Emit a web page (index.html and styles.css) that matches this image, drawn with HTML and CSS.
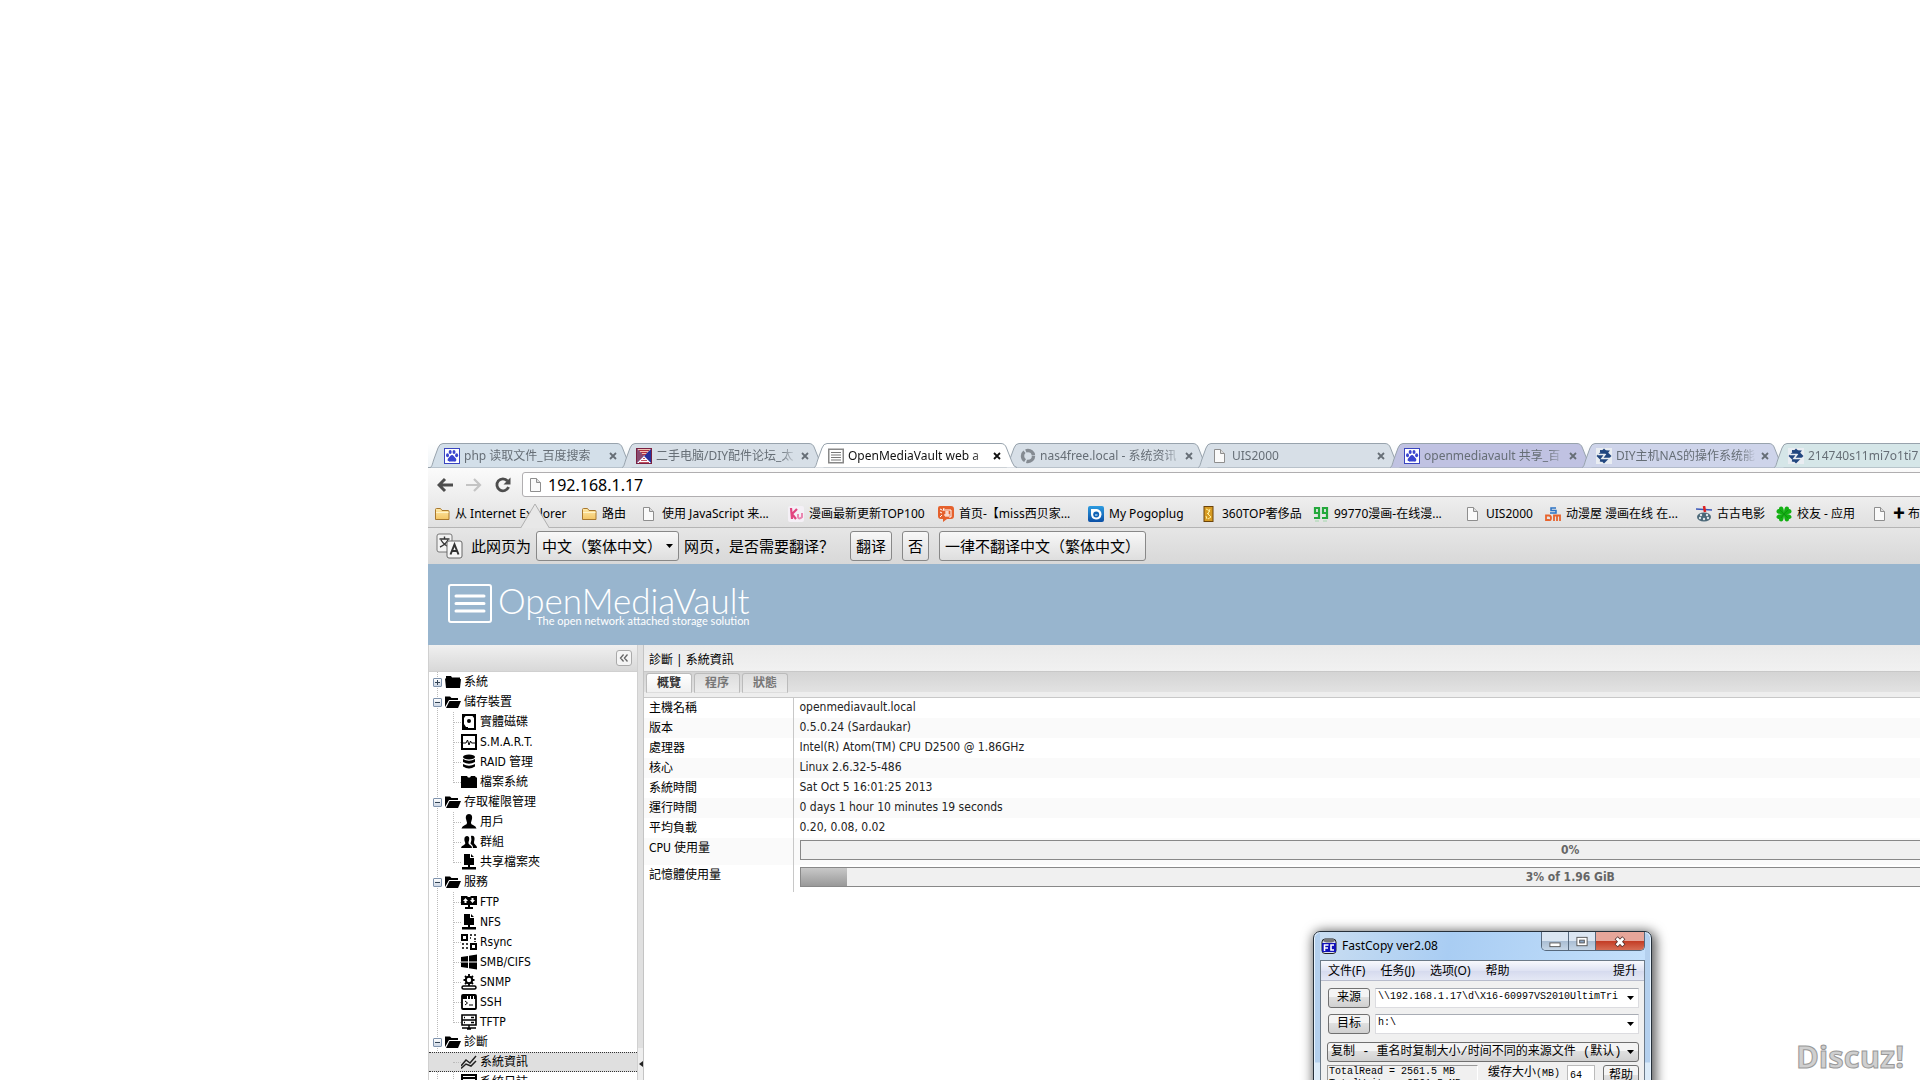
FILE: index.html
```html
<!DOCTYPE html>
<html lang="zh-Hans">
<head>
<meta charset="utf-8">
<title>OpenMediaVault web administration</title>
<link rel="stylesheet" href="styles.css">
</head>
<body>
<svg class="defs" aria-hidden="true">
  <defs>
    <linearGradient id="folderFill" x1="0" y1="0" x2="0" y2="1"><stop offset="0" stop-color="#ffe9a8"/><stop offset="1" stop-color="#f3c565"/></linearGradient>
    <linearGradient id="pogoFill" x1="0" y1="0" x2="0" y2="1"><stop offset="0" stop-color="#2c9be0"/><stop offset="1" stop-color="#0b4fa5"/></linearGradient>
  </defs>
  <symbol id="tab" viewBox="0 0 206 25"><path d="M2 24.500C4 24 4 22 6 16L10 5Q11.500 .5 15 .5H189Q193 .5 194.500 5L200 19Q202 24.500 205 24.500" stroke="#98a3ad"/></symbol>
  <symbol id="close" viewBox="0 0 8 8"><path d="M1 1L7 7M7 1L1 7" stroke="currentColor" stroke-width="1.800"/></symbol>
  <symbol id="paw" viewBox="0 0 16 16"><rect x=".5" y=".5" width="15" height="15" fill="#fff" stroke="#3a45c0"/><g fill="#3a45d0"><ellipse cx="3.500" cy="7.200" rx="1.500" ry="2"/><ellipse cx="6.200" cy="4" rx="1.500" ry="2"/><ellipse cx="10" cy="4" rx="1.500" ry="2"/><ellipse cx="12.600" cy="7.200" rx="1.500" ry="2"/><path d="M8 7C6.500 7 5.500 9 4.300 10.200C2.800 12 4 14 6 13.600C7.500 13.300 8.500 13.300 10 13.600C12 14 13.200 12 11.700 10.200C10.500 9 9.500 7 8 7"/></g></symbol>
  <symbol id="forum" viewBox="0 0 16 16"><rect x=".5" y=".5" width="15" height="15" fill="#26309c" stroke="#7a2040"/><path d="M1 1H15L8 8Z" fill="#f0c0b4"/><path d="M3 2.500H13M5 4.500H11M6 6.500H10" stroke="#b03040"/><path d="M1 1L8 8L1 15Z" fill="#8a4a70"/><path d="M1 15L8 8L15 15Z" fill="#fff"/><path d="M7 10.500H9M5 12.500H11M3 14.500H13" stroke="#c05060"/></symbol>
  <symbol id="omv" viewBox="0 0 16 16"><rect x=".75" y="1.250" width="14.500" height="13.500" fill="#fff" stroke="#888" stroke-width="1.500"/><path d="M3 4.500H13M3 7H13M3 9.500H13M3 12H13" stroke="#777" stroke-width="1.200"/></symbol>
  <symbol id="ring" viewBox="0 0 16 16"><circle cx="8" cy="8" r="5.500" fill="none" stroke="#858b92" stroke-width="3.400" stroke-dasharray="10 1.500"/></symbol>
  <symbol id="doc" viewBox="0 0 16 16"><path d="M2.500 1.500H8.500L12.500 5.500V14.500H2.500Z" fill="#fafafa" stroke="#8e8e8e"/><path d="M8.500 1.500V5.500H12.500" fill="#ddd" stroke="#8e8e8e"/></symbol>
  <symbol id="swirl" viewBox="0 0 16 16"><rect width="16" height="16" fill="#e9edf2"/><path d="M8 .5L15.500 8L8 15.500L.5 8Z" fill="#21467f"/><path d="M2 6.500H9L6 10.500H14" fill="none" stroke="#e9edf2" stroke-width="1.600"/><path d="M4 3L12 3.500L10 6M6 13L4 12.500" fill="none" stroke="#21467f" stroke-width="2"/></symbol>
  <symbol id="folder" viewBox="0 0 16 16"><path d="M1.500 13.500V3.500Q1.500 2.500 2.500 2.500H6.500L8 4.500H14Q15 4.500 15 5.500V13.500Z" fill="url(#folderFill)" stroke="#a9782e"/><path d="M2 6.500H14.500" stroke="#fff3c8"/></symbol>
  <symbol id="ku" viewBox="0 0 16 16"><rect width="16" height="16" rx="2" fill="#f4f0f6"/><path d="M3 2L4 13M9 3L4 8L8 13" stroke="#e2447f" stroke-width="2.200" fill="none"/><path d="M10 8V11Q11 14 14 11V7" stroke="#ea86b0" stroke-width="2" fill="none"/></symbol>
  <symbol id="tao" viewBox="0 0 16 16"><path d="M2 0H13Q16 0 16 3V10Q16 13 13 13H9L5 16V13H3Q0 13 0 10V2Q0 0 2 0" fill="#e5612d"/><path d="M2 3L4 4M2 6L4 7M2 11L4 9M6 2L5 5M6 4H13V11H11M7 6H11M9 5V10M7 8H11M7 8V10H11V8" stroke="#fff" fill="none"/></symbol>
  <symbol id="pogo" viewBox="0 0 16 16"><rect width="16" height="16" rx="2" fill="url(#pogoFill)"/><path d="M3 3H9Q13.500 4 13.500 8.500Q13 13.500 8 13.500Q3 13 3 8Z" fill="#fff"/><circle cx="8.200" cy="8.500" r="3" fill="#0e63b6"/><path d="M7 9H9.500" stroke="#fff"/></symbol>
  <symbol id="gold" viewBox="0 0 16 16"><rect x="3" y=".5" width="9" height="15" fill="#d69b22" stroke="#6b430a"/><path d="M5 3L9 5L6 8M9 3L7 8L10 11L7 13M5 10L6 13" stroke="#fff0a0" fill="none"/></symbol>
  <symbol id="nine" viewBox="0 0 16 16"><path d="M6 7H2V2H6V12H1M14 7H10V2H14V12H9" stroke="#24a83c" stroke-width="2.200" fill="none"/><path d="M2 15H6M10 15H14" stroke="#a3d8ac"/></symbol>
  <symbol id="sdm" viewBox="0 0 16 16"><path d="M11 2H6V4.500H11V7H5" stroke="#2d73c4" stroke-width="1.500" fill="none"/><path d="M1 9.500H4Q6 9.500 6 12T4 14H1ZM9 15V9.500H15V15M12 9.500V15" stroke="#e8632c" stroke-width="1.800" fill="none"/></symbol>
  <symbol id="film" viewBox="0 0 16 16"><path d="M0 3L16 4" stroke="#3956b8" stroke-width="1.500"/><path d="M8 0L9 6" stroke="#d22" stroke-width="2.500"/><ellipse cx="8" cy="11" rx="7" ry="4.500" fill="#4b6878"/><g fill="#dce6ea"><circle cx="5" cy="9" r="1.200"/><circle cx="11" cy="9" r="1.200"/><circle cx="4" cy="12" r="1.200"/><circle cx="12" cy="12" r="1.200"/><circle cx="8" cy="13" r="1.200"/></g></symbol>
  <symbol id="clover" viewBox="0 0 16 16"><g fill="#12b012"><path d="M8 8C4 8 0 8 .5 5C1 3 3 3 3 3C3 0 6 0 7 1.500C8 3.500 8 6 8 8M8 8C12 8 16 8 15.500 5C15 3 13 3 13 3C13 0 10 0 9 1.500C8 3.500 8 6 8 8M8 8C4 8 0 8.500 .5 11.500C1 13 3 13 3 13C3 16 6 16 7 14.500C8 12 8 10 8 8M8 8C12 8 16 8.500 15.500 11.500C15 13 13 13 13 13C13 16 10 16 9 14.500C8 12 8 10 8 8"/></g><path d="M8 8L4 4M8 8L12 4M8 8L5 12M8 8L12 12" stroke="#0c8a10" stroke-width=".7"/></symbol>
  <symbol id="t-folder" viewBox="0 0 16 16"><path d="M0 4.500H1V2H6L7 3.500H15V5H16L15 14H1Z"/></symbol>
  <symbol id="t-open" viewBox="0 0 16 16"><path d="M0 13V2.500H5L6.500 4H13V6H4Z"/><path d="M1 14L4.500 7H16L13 14Z"/></symbol>
  <symbol id="t-files" viewBox="0 0 16 16"><path d="M0 2H6L7 3.500H9L10 2H14L15 3.500H16V14H0Z"/></symbol>
  <symbol id="t-disk" viewBox="0 0 16 16"><path fill-rule="evenodd" d="M1 0H15V16H1ZM4.500 2L3 4V10L5 13H7V14H13V4L11.500 2Z"/><circle cx="8" cy="7" r="2"/></symbol>
  <symbol id="t-smart" viewBox="0 0 16 16"><rect x="1" y="1" width="14" height="14" fill="none" stroke="#000" stroke-width="2"/><path d="M2 9H5L6.500 6L8 11L9.500 7L10.500 9H14" fill="none" stroke="#000"/></symbol>
  <symbol id="t-raid" viewBox="0 0 16 16"><ellipse cx="8" cy="3" rx="6" ry="2.500"/><path d="M2 5Q8 8.500 14 5V8Q8 11.500 2 8ZM2 10Q8 13.500 14 10V12.500Q8 16.500 2 12.500Z"/></symbol>
  <symbol id="t-user" viewBox="0 0 16 16"><path d="M8 0C11 0 11.500 3 11 5C10.500 7 10 8 10 9Q10 10.500 12 11Q15 12 15.500 14.500H.5Q1 12 4 11Q6 10.500 6 9C6 8 5.500 7 5 5C4.500 3 5 0 8 0"/></symbol>
  <symbol id="t-group" viewBox="0 0 16 16"><path d="M6 2C9 2 8.500 6 7.500 8Q7 10 9 11Q11 12 11 14H0Q0 12 3 11Q5 10 4 8C3 6 3 2 6 2M10 2C14 1 14 5 13 8Q12.500 9.500 14.500 11Q16 12 16 14H12Q12 11.500 9.500 9.500Q11 6 10 2"/></symbol>
  <symbol id="t-share" viewBox="0 0 16 16"><path d="M3 0H9V4H13V11H3Z"/><path d="M10 0L13 3H10ZM7 11H9V13H15V15.500H1V13H7Z"/></symbol>
  <symbol id="t-ftp" viewBox="0 0 16 16"><path fill-rule="evenodd" d="M0 2H6L7 3H9L10 2H16V11H0ZM4.500 4L2 7H3.500V9H5.500V7H7ZM11.500 9L14 6H12.500V4H10.500V6H9Z"/><path d="M7 11H9V13H12V15H4V13H7Z"/></symbol>
  <symbol id="t-rsync" viewBox="0 0 16 16"><path d="M1 1H6V6H1ZM10 10H15V15H10Z" fill="none" stroke="#000" stroke-width="2"/><path d="M9 1H11M13 1H15M14 4V6M14 7V8M2 9V11M2 13V15M5 14H7M9 4H10M5 10H7" stroke="#000" stroke-width="1.500"/></symbol>
  <symbol id="t-win" viewBox="0 0 16 16"><path d="M0 3L7 2V7.500H0ZM8 1.800L16 .5V7.500H8ZM0 8.500H7V14L0 13ZM8 8.500H16V15.500L8 14.200Z"/></symbol>
  <symbol id="t-snmp" viewBox="0 0 16 16"><circle cx="8" cy="6" r="3.200" fill="none" stroke="#000" stroke-width="2"/><path d="M8 0V2M8 9V12M2.500 6H4M12 6H13.500M4 2L5.500 3.500M12 2L10.500 3.500M4 10L5.500 8.500M12 10L10.500 8.500" stroke="#000" stroke-width="1.800"/><rect x="1" y="12" width="14" height="3" rx="1.500" fill="#fff" stroke="#000" stroke-width="1.500"/></symbol>
  <symbol id="t-ssh" viewBox="0 0 16 16"><rect x="1" y="1" width="14" height="14" rx="1" fill="none" stroke="#000" stroke-width="1.800"/><path d="M1 3.500H15" stroke="#000" stroke-width="3" stroke-dasharray="5 1 2 1 2 1 4"/><path d="M4 7L6.500 9L4 11M8 11H12" stroke="#000" fill="none"/></symbol>
  <symbol id="t-tftp" viewBox="0 0 16 16"><path d="M1 1H15V6H1ZM1 6H15V11H1Z" fill="none" stroke="#000" stroke-width="1.600"/><path d="M10 3.500H13M10 8.500H13M3 3.500H4M3 8.500H4M8 11V14M1 14H15M6 15H10" stroke="#000" stroke-width="1.400"/></symbol>
  <symbol id="t-chart" viewBox="0 0 16 16"><path d="M0 12L5 6L9 9L15 2M0 14.500L5 10L10 12L15 7" fill="none" stroke="#222" stroke-width="1.500"/></symbol>
  <symbol id="t-log" viewBox="0 0 16 16"><path d="M1 1H15V15H1ZM1 4H15M4 7H12M4 10H12" fill="none" stroke="#000" stroke-width="2"/></symbol>
</svg>

<div class="desktop">
  <div class="browser">
    <nav class="tabs" aria-label="标签页">
      <div class="tab glow"><svg class="shape"><use href="#tab"/></svg><svg class="ic"><use href="#paw"/></svg><span class="name">php 读取文件_百度搜索</span><button class="x" aria-label="关闭"><svg><use href="#close"/></svg></button></div>
      <div class="tab"><svg class="shape"><use href="#tab"/></svg><svg class="ic"><use href="#forum"/></svg><span class="name">二手电脑/DIY配件论坛_太</span><button class="x" aria-label="关闭"><svg><use href="#close"/></svg></button></div>
      <div class="tab active"><svg class="shape"><use href="#tab"/></svg><svg class="ic"><use href="#omv"/></svg><span class="name">OpenMediaVault web a</span><button class="x" aria-label="关闭"><svg><use href="#close"/></svg></button></div>
      <div class="tab"><svg class="shape"><use href="#tab"/></svg><svg class="ic"><use href="#ring"/></svg><span class="name">nas4free.local - 系统资讯</span><button class="x" aria-label="关闭"><svg><use href="#close"/></svg></button></div>
      <div class="tab"><svg class="shape"><use href="#tab"/></svg><svg class="ic"><use href="#doc"/></svg><span class="name">UIS2000</span><button class="x" aria-label="关闭"><svg><use href="#close"/></svg></button></div>
      <div class="tab violet"><svg class="shape"><use href="#tab"/></svg><svg class="ic"><use href="#paw"/></svg><span class="name">openmediavault 共享_百</span><button class="x" aria-label="关闭"><svg><use href="#close"/></svg></button></div>
      <div class="tab lilac"><svg class="shape"><use href="#tab"/></svg><svg class="ic"><use href="#swirl"/></svg><span class="name">DIY主机NAS的操作系统能</span><button class="x" aria-label="关闭"><svg><use href="#close"/></svg></button></div>
      <div class="tab mint"><svg class="shape"><use href="#tab"/></svg><svg class="ic"><use href="#swirl"/></svg><span class="name">214740s11mi7o1ti7</span></div>
    </nav>
    <div class="toolbar">
      <button class="nav" aria-label="后退"><svg viewBox="0 0 16 16"><path d="M16 8H2M8 2L2 8L8 14" fill="none" stroke="#4d4d4d" stroke-width="3"/></svg></button>
      <button class="nav" aria-label="前进"><svg viewBox="0 0 16 16"><path d="M0 8H14M8 2L14 8L8 14" fill="none" stroke="#c4c4c4" stroke-width="2.200"/></svg></button>
      <button class="nav" aria-label="刷新"><svg viewBox="0 0 16 16"><path d="M12.500 4A6 6 0 1 0 13.500 10" fill="none" stroke="#4d4d4d" stroke-width="2.800"/><path d="M15.500 .5V7.500H8.500Z" fill="#4d4d4d"/></svg></button>
      <label class="omnibox"><svg class="ic"><use href="#doc"/></svg><input type="text" value="192.168.1.17" aria-label="网址"></label>
    </div>
    <nav class="bookmarks" aria-label="书签">
      <a href="#"><svg class="ic"><use href="#folder"/></svg>从 Internet Explorer</a>
      <a href="#"><svg class="ic"><use href="#folder"/></svg>路由</a>
      <a href="#"><svg class="ic"><use href="#doc"/></svg>使用 JavaScript 来...</a>
      <a href="#"><svg class="ic"><use href="#ku"/></svg>漫画最新更新TOP100</a>
      <a href="#"><svg class="ic"><use href="#tao"/></svg>首页-【miss西贝家...</a>
      <a href="#"><svg class="ic"><use href="#pogo"/></svg>My Pogoplug</a>
      <a href="#"><svg class="ic"><use href="#gold"/></svg>360TOP奢侈品</a>
      <a href="#"><svg class="ic"><use href="#nine"/></svg>99770漫画-在线漫...</a>
      <a href="#"><svg class="ic"><use href="#doc"/></svg>UIS2000</a>
      <a href="#"><svg class="ic"><use href="#sdm"/></svg>动漫屋 漫画在线 在...</a>
      <a href="#"><svg class="ic"><use href="#film"/></svg>古古电影</a>
      <a href="#"><svg class="ic"><use href="#clover"/></svg>校友 - 应用</a>
      <a href="#"><svg class="ic"><use href="#doc"/></svg>✚ 布</a>
      <svg class="notch" viewBox="0 0 28 25"><path d="M0 25L14 1L28 25Z" fill="#e8e8e8"/><path d="M0 24.500L14 1L28 24.500" fill="none" stroke="#b0b0b0"/></svg>
    </nav>
    <div class="translate">
      <svg class="lang" viewBox="0 0 27 27"><rect x="1" y="1" width="15" height="18" rx="2" fill="#f2f2f2" stroke="#777"/><path d="M3.500 6H13.500M8.500 3.500V6M5 7Q8 12 13 14M12 7Q9 12 4 14" stroke="#333" stroke-width="1.400" fill="none"/><rect x="11" y="8" width="15" height="17" rx="2" fill="#f6f6f6" stroke="#666"/><path d="M14.500 21.500L18.500 11.500L22.500 21.500M16 18H21" stroke="#333" stroke-width="2" fill="none"/></svg>
      <label for="lang">此网页为</label>
      <select id="lang"><option>中文（繁体中文）</option></select>
      <span class="ask">网页，是否需要翻译？</span>
      <button>翻译</button><button>否</button><button>一律不翻译中文（繁体中文）</button>
    </div>

    <header class="banner">
      <svg class="mark" viewBox="0 0 44 40"><rect x="1" y="1" width="42" height="37" rx="2" fill="none" stroke="#fff" stroke-width="2"/><path d="M8 12H36M8 19.500H36M8 27H36" stroke="#fff" stroke-width="3" stroke-linecap="round"/></svg>
      <div class="brand"><span class="word">OpenMediaVault</span><span class="motto">The open network attached storage solution</span></div>
    </header>

    <div class="work" lang="zh-Hant">
      <aside class="side">
        <div class="side-head"><button aria-label="收合"><svg viewBox="0 0 16 16"><path d="M7.500 4L4 8L7.500 12M12 4L8.500 8L12 12" fill="none" stroke="#666" stroke-width="1.500"/></svg></button></div>
        <ul class="tree">
          <li><a href="#"><i class="exp plus"></i><svg class="ic"><use href="#t-folder"/></svg>系統</a></li>
          <li><a href="#"><i class="exp"></i><svg class="ic"><use href="#t-open"/></svg>儲存裝置</a>
            <ul>
              <li><a href="#"><svg class="ic"><use href="#t-disk"/></svg>實體磁碟</a></li>
              <li><a href="#" class="latin"><svg class="ic"><use href="#t-smart"/></svg>S.M.A.R.T.</a></li>
              <li><a href="#"><svg class="ic"><use href="#t-raid"/></svg><span><span class="latin">RAID</span> 管理</span></a></li>
              <li><a href="#"><svg class="ic"><use href="#t-files"/></svg>檔案系統</a></li>
            </ul></li>
          <li><a href="#"><i class="exp"></i><svg class="ic"><use href="#t-open"/></svg>存取權限管理</a>
            <ul>
              <li><a href="#"><svg class="ic"><use href="#t-user"/></svg>用戶</a></li>
              <li><a href="#"><svg class="ic"><use href="#t-group"/></svg>群組</a></li>
              <li><a href="#"><svg class="ic"><use href="#t-share"/></svg>共享檔案夾</a></li>
            </ul></li>
          <li><a href="#"><i class="exp"></i><svg class="ic"><use href="#t-open"/></svg>服務</a>
            <ul>
              <li><a href="#" class="latin"><svg class="ic"><use href="#t-ftp"/></svg>FTP</a></li>
              <li><a href="#" class="latin"><svg class="ic"><use href="#t-share"/></svg>NFS</a></li>
              <li><a href="#" class="latin"><svg class="ic"><use href="#t-rsync"/></svg>Rsync</a></li>
              <li><a href="#" class="latin"><svg class="ic"><use href="#t-win"/></svg>SMB/CIFS</a></li>
              <li><a href="#" class="latin"><svg class="ic"><use href="#t-snmp"/></svg>SNMP</a></li>
              <li><a href="#" class="latin"><svg class="ic"><use href="#t-ssh"/></svg>SSH</a></li>
              <li><a href="#" class="latin"><svg class="ic"><use href="#t-tftp"/></svg>TFTP</a></li>
            </ul></li>
          <li><a href="#"><i class="exp"></i><svg class="ic"><use href="#t-open"/></svg>診斷</a>
            <ul>
              <li class="on"><a href="#"><svg class="ic"><use href="#t-chart"/></svg>系統資訊</a></li>
              <li><a href="#"><svg class="ic"><use href="#t-log"/></svg>系統日誌</a></li>
            </ul></li>
        </ul>
      </aside>
      <div class="split"><button aria-label="收合側欄"></button></div>
      <main class="panel">
        <h1>診斷 | 系統資訊</h1>
        <div class="ptabs"><button class="cur">概覽</button><button>程序</button><button>狀態</button></div>
        <table class="info">
          <tr><th>主機名稱</th><td>openmediavault.local</td></tr>
          <tr><th>版本</th><td>0.5.0.24 (Sardaukar)</td></tr>
          <tr><th>處理器</th><td>Intel(R) Atom(TM) CPU D2500 @ 1.86GHz</td></tr>
          <tr><th>核心</th><td>Linux 2.6.32-5-486</td></tr>
          <tr><th>系統時間</th><td>Sat Oct 5 16:01:25 2013</td></tr>
          <tr><th>運行時間</th><td>0 days 1 hour 10 minutes 19 seconds</td></tr>
          <tr><th>平均負載</th><td>0.20, 0.08, 0.02</td></tr>
          <tr class="meter"><th><span class="latin">CPU</span> 使用量</th><td><div class="bar"><i style="width:0%"></i><b>0%</b></div></td></tr>
          <tr class="meter"><th>記憶體使用量</th><td><div class="bar"><i style="width:3%"></i><b>3% of 1.96 GiB</b></div></td></tr>
        </table>
      </main>
    </div>
  </div>

  <section class="win">
    <div class="caption">
      <svg class="fc" viewBox="0 0 16 16"><rect x="1" y="1" width="14" height="14.500" rx="3" fill="#dfe3f5" stroke="#222"/><ellipse cx="8" cy="2.500" rx="6" ry="2" fill="#777"/><rect x="1" y="5" width="14" height="9" fill="#1212b8"/><path d="M3.500 13V7H7.500M4 10H7M13 7H10V12H13" stroke="#fff" stroke-width="1.600" fill="none"/></svg>
      <span>FastCopy ver2.08</span>
      <div class="ctl"><button aria-label="最小化"><svg viewBox="0 0 28 19"><rect x="8.500" y="10.500" width="11" height="4" fill="#fff" stroke="#555"/></svg></button><button aria-label="最大化"><svg viewBox="0 0 28 19"><rect x="8.500" y="4.500" width="11" height="9" fill="#fff" stroke="#555"/><rect x="11.500" y="7.500" width="5" height="3" fill="#8aa4c4" stroke="#555"/></svg></button><button class="kill" aria-label="关闭"><svg viewBox="0 0 28 19"><path d="M10 5L18 13.500M18 5L10 13.500" stroke="#54302c" stroke-width="4.600"/><path d="M10.500 5.500L17.500 13M17.500 5.500L10.500 13" stroke="#fff" stroke-width="3"/></svg></button></div>
    </div>
    <div class="client">
      <div class="menu"><a href="#">文件(F)</a><a href="#">任务(J)</a><a href="#">选项(O)</a><a href="#">帮助</a><a href="#" class="up">提升</a></div>
      <div class="form">
        <div class="row"><button>来源</button><select aria-label="来源"><option>\\192.168.1.17\d\X16-60997VS2010UltimTri</option></select></div>
        <div class="row"><button>目标</button><select aria-label="目标"><option>h:\</option></select></div>
        <select class="mode" aria-label="模式"><option>复制 - 重名时复制大小/时间不同的来源文件 (默认)</option></select>
        <div class="foot"><div class="stat">TotalRead = 2561.5 MB<br>TotalWrite = 2561.5 MB</div><label for="buf">缓存大小<span>(MB)</span></label><input id="buf" type="text" value="64"><button>帮助</button></div>
      </div>
    </div>
  </section>
  <div class="stamp">Discuz!</div>
</div>
</body>
</html>
```
FILE: styles.css
```css
* { box-sizing: border-box; }
body { margin: 0; background: #fff; color: #000; font: 12px/16px "Noto Sans", "Noto Sans CJK SC", sans-serif; }
button, input, select { font: inherit; color: inherit; margin: 0; padding: 0; border: 0; background: none; appearance: none; border-radius: 0; }
a { color: inherit; text-decoration: none; }
.defs { position: absolute; width: 0; height: 0; }
svg { display: block; flex: none; }
.ic { width: 16px; height: 16px; }
.desktop { position: relative; height: 100vh; overflow: hidden; padding: 443px 0 0 428px; }
.browser { width: 100vw; }

/* browser chrome */
.tabs { display: flex; height: 25px; background: linear-gradient(#fff, #eef3f6); box-shadow: inset 0 -1px #98a3ad; }
.tab { position: relative; display: flex; align-items: center; width: 192px; height: 25px; padding: 0 3px 0 16px; color: #666e76; --fill: #d7dfe7; }
.tab > * { position: relative; }
.tab .shape { position: absolute; left: 0; top: 0; width: 206px; height: 25px; fill: var(--fill); }
.tab .name { flex: 1; width: 0; margin: 0 4px 0 4px; overflow: hidden; white-space: nowrap; mask-image: linear-gradient(90deg, #000 88%, transparent); }
.tab .x { width: 8px; height: 8px; }
.tab .x svg { width: 8px; height: 8px; }
.tab.active { z-index: 1; color: #111; --fill: #fff; }
.tab.glow { --fill: #d3dfe9; }
.tab.violet { --fill: #c0c2e2; }
.tab.lilac { --fill: #ced4ea; }
.tab.mint { --fill: #d5e6e8; }
.toolbar { display: flex; align-items: center; height: 33px; padding: 0 0 0 9px; background: linear-gradient(#fbfbfb, #ececec); }
.nav { width: 16px; height: 16px; margin-right: 13px; }
.nav svg { width: 16px; height: 16px; }
.omnibox { display: flex; align-items: center; flex: 1; height: 25px; margin: 0 90px 0 -2px; padding-left: 5px; background: #fff; border: 1px solid #b0aeb0; border-radius: 3px; }
.omnibox input { flex: 1; margin-left: 4px; font-size: 16px; line-height: 22px; }
.bookmarks { position: relative; display: grid; grid-template-columns: 147px 60px 147px 150px 150px 113px 112px 152px 80px 151px 80px 96px 96px; height: 27px; padding-left: 6px; background: linear-gradient(#ececec, #e0e0e0); border-bottom: 1px solid #b4b4b4; }
.bookmarks a { display: flex; align-items: center; gap: 5px; white-space: pre; }
.notch { position: absolute; left: 93px; top: 2px; width: 28px; height: 25px; }
.translate { display: flex; align-items: center; height: 36px; padding-left: 8px; font-size: 15px; line-height: 20px; background: linear-gradient(#e6e6e6, #d8d8d8); }
.lang { width: 27px; height: 27px; margin-right: 8px; }
.translate select, .translate button { height: 30px; padding: 0 5px; background: linear-gradient(#f8f8f8, #dedede); border: 1px solid #888; border-radius: 3px; white-space: nowrap; }
.translate select { width: 143px; margin: 0 5px; padding-right: 16px; background: url("data:image/svg+xml,%3Csvg xmlns='http://www.w3.org/2000/svg' width='7' height='4'%3E%3Cpath d='M0 0H7L3.500 4Z'/%3E%3C/svg%3E") no-repeat right 5px center, linear-gradient(#f8f8f8, #dedede); }
.ask { width: 156px; margin-right: 10px; white-space: nowrap; }
.translate button { margin-right: 10px; }

/* application */
.banner { display: flex; gap: 6px; height: 81px; padding: 20px 0 0 20px; background: #98b5ce; color: #fff; font-family: Lato, sans-serif; }
.mark { width: 44px; height: 40px; }
.brand { display: flex; flex-direction: column; align-items: flex-end; }
.word { font-size: 35px; font-weight: 300; line-height: 32px; }
.motto { font-size: 11px; line-height: 10px; }
.work { display: flex; font-family: "Noto Sans", "Noto Sans CJK TC", sans-serif; }
.latin, .info td { font-family: "DejaVu Sans Condensed", "DejaVu Sans", sans-serif; font-stretch: condensed; }
.side { width: 210px; border: 1px solid #d0d0d0; border-width: 0 1px; }
.side-head { display: flex; justify-content: flex-end; height: 27px; padding: 5px; background: linear-gradient(#f0f0f0, #d8d8d8); border-bottom: 1px solid #d0d0d0; }
.side-head button { width: 16px; height: 16px; background: #f5f5f5; border: 1px solid #aaa; border-radius: 3px; }
.side-head svg { width: 14px; height: 14px; }
.tree, .tree ul { margin: 0; padding: 0; list-style: none; background: repeating-linear-gradient(#bbb 0 1px, transparent 1px 2px) 8px 0 / 1px 100% no-repeat; }
.tree ul { background-position: 24px 0; background-size: 1px calc(100% - 10px); }
.tree a { display: flex; align-items: center; gap: 3px; height: 20px; padding-left: 4px; white-space: nowrap; }
.tree ul a { padding-left: 24px; }
.tree ul a::before { content: ""; width: 8px; margin-right: -3px; border-top: 1px dotted #bbb; }
.exp { width: 9px; height: 9px; border: 1px solid #7f93ad; border-radius: 1px; background: linear-gradient(#345, #345) center / 5px 1px no-repeat, linear-gradient(#fff, #ccd6e4); }
.exp.plus { background: linear-gradient(#345, #345) center / 5px 1px no-repeat, linear-gradient(#345, #345) center / 1px 5px no-repeat, linear-gradient(#fff, #ccd6e4); }
.on { background: #dfdfdf; }
.on a { border: 1px dotted #333; border-width: 1px 0; }
.split { display: flex; align-items: flex-start; width: 5px; padding-top: 403px; background: #e0e0e0; }
.split button { width: 5px; height: 35px; background: url("data:image/svg+xml,%3Csvg xmlns='http://www.w3.org/2000/svg' width='4' height='6'%3E%3Cpath d='M4 0V6L0 3Z' fill='%23222'/%3E%3C/svg%3E") no-repeat center 13px, #eee; }
.panel { flex: 1; padding-right: 1px; border-left: 1px solid #c4c4c4; }
.panel h1 { height: 26px; margin: 0; padding: 0 5px; font-size: 12px; font-weight: 400; line-height: 30px; background: linear-gradient(#eaeaea, #f1f1f1); }
.ptabs { display: flex; gap: 2px; height: 27px; padding: 1px 2px 4px; background: linear-gradient(#d4d4d4, #e2e2e2 80%, #eee 81%); border: 1px solid #c8c8c8; border-width: 1px 0; }
.ptabs button { width: 46px; font-weight: 700; color: #777; background: linear-gradient(#ddd, #ececec); border: 1px solid #bbb; border-bottom-color: #ddd; border-radius: 3px 3px 0 0; }
.ptabs .cur { color: #333; background: linear-gradient(#fff, #f0f0f0); }
.info { width: 100%; border-collapse: collapse; }
.info tr:nth-child(even) { background: #fafafa; }
.info th { width: 149px; height: 20px; padding: 2px 5px; font-weight: 400; text-align: left; vertical-align: top; border-right: 1px solid #c8c8c8; white-space: nowrap; }
.info td { padding: 0 6px 2px; color: #222; }
.info .meter th { height: 27px; }
.info .meter td { padding: 2px 6px 5px; }
.bar { display: grid; align-items: center; height: 20px; background: #f0f0f0; border: 1px solid #888; }
.bar > * { grid-area: 1 / 1; }
.bar i { height: 18px; background: linear-gradient(#c8c8c8, #999); }
.bar b { text-align: center; color: #666; }

/* floating window */
.win { position: absolute; left: 1313px; top: 931px; width: 339px; height: 300px; padding: 0 6px; border: 1px solid #26303a; border-radius: 7px; background: linear-gradient(#b4d0ee 0 130px, #dcebf8 131px); box-shadow: inset 0 0 0 1px #e8f4ff, 2px 2px 12px 2px rgba(0, 0, 0, .65); }
.win .caption { display: flex; align-items: center; height: 28px; gap: 5px; padding-left: 1px; background: linear-gradient(100deg, #c9ddf1, #a9cdf3 40%, #c4e0fb); }
.fc { width: 16px; height: 16px; }
.ctl { display: flex; align-self: flex-start; margin-left: auto; height: 19px; border: 1px solid #56687c; border-top: 0; border-radius: 0 0 5px 5px; overflow: hidden; }
.ctl button { width: 27px; height: 19px; background: linear-gradient(#dbe6f2 45%, #a8bcd2 46%, #c8d8e8); border-right: 1px solid #56687c; }
.ctl svg { width: 100%; height: 18px; }
.ctl .kill { width: 48px; border: 0; background: linear-gradient(#e6a69a 45%, #c23a22 46%, #d8735a); }
.client { border: 1px solid #6c7a88; background: #f0f0f0; }
.menu { display: flex; gap: 15px; height: 20px; padding: 0 7px; line-height: 19px; background: linear-gradient(#f8f9fd, #dfe3f3 50%, #d5daee 51%, #e4e8f5); border-bottom: 1px solid #b8bccc; }
.menu .up { margin-left: auto; }
.form { padding: 7px 5px 0 6px; font-family: "Liberation Mono", "Noto Sans CJK SC", monospace; }
.row { display: flex; gap: 5px; margin: 0 0 6px 1px; }
.win .form button { width: 42px; height: 20px; background: linear-gradient(#f4f4f4 45%, #e0e0e0 46%, #d0d0d0); border: 1px solid #707070; border-radius: 3px; }
.win select { flex: 1; width: 100px; height: 20px; padding: 0 18px 2px 2px; font-size: 10px; border: 1px solid #dcdce0; border-top-color: #a8acb4; background: url("data:image/svg+xml,%3Csvg xmlns='http://www.w3.org/2000/svg' width='7' height='4'%3E%3Cpath d='M0 0H7L3.500 4Z'/%3E%3C/svg%3E") no-repeat right 4px center, #fff; }
.win select.mode { width: 100%; margin-top: 2px; padding: 0 12px 0 3px; font-size: 12px; border: 1px solid #707070; border-radius: 3px; background: url("data:image/svg+xml,%3Csvg xmlns='http://www.w3.org/2000/svg' width='7' height='4'%3E%3Cpath d='M0 0H7L3.500 4Z'/%3E%3C/svg%3E") no-repeat right 4px center, linear-gradient(#f4f4f4 45%, #e0e0e0 46%, #d0d0d0); }
.foot { display: flex; align-items: flex-start; margin-top: 3px; }
.stat { width: 151px; height: 60px; padding-left: 1px; font-size: 10px; line-height: 12px; border: 1px solid #999; border-color: #999 #fff #fff #999; white-space: nowrap; }
.foot label { margin-left: 10px; white-space: nowrap; }
.foot label span { font-size: 10px; }
.foot input { width: 28px; height: 20px; margin-left: 7px; padding-left: 2px; font-size: 10px; background: #fff; border: 1px solid #bbb; }
.win .foot button { width: 36px; height: 22px; margin-left: auto; }
.stamp { position: absolute; right: 16px; bottom: 4px; font: 700 31px/40px "Open Sans", sans-serif; color: #cfcfcf; -webkit-text-stroke: 1px #999; }
```
